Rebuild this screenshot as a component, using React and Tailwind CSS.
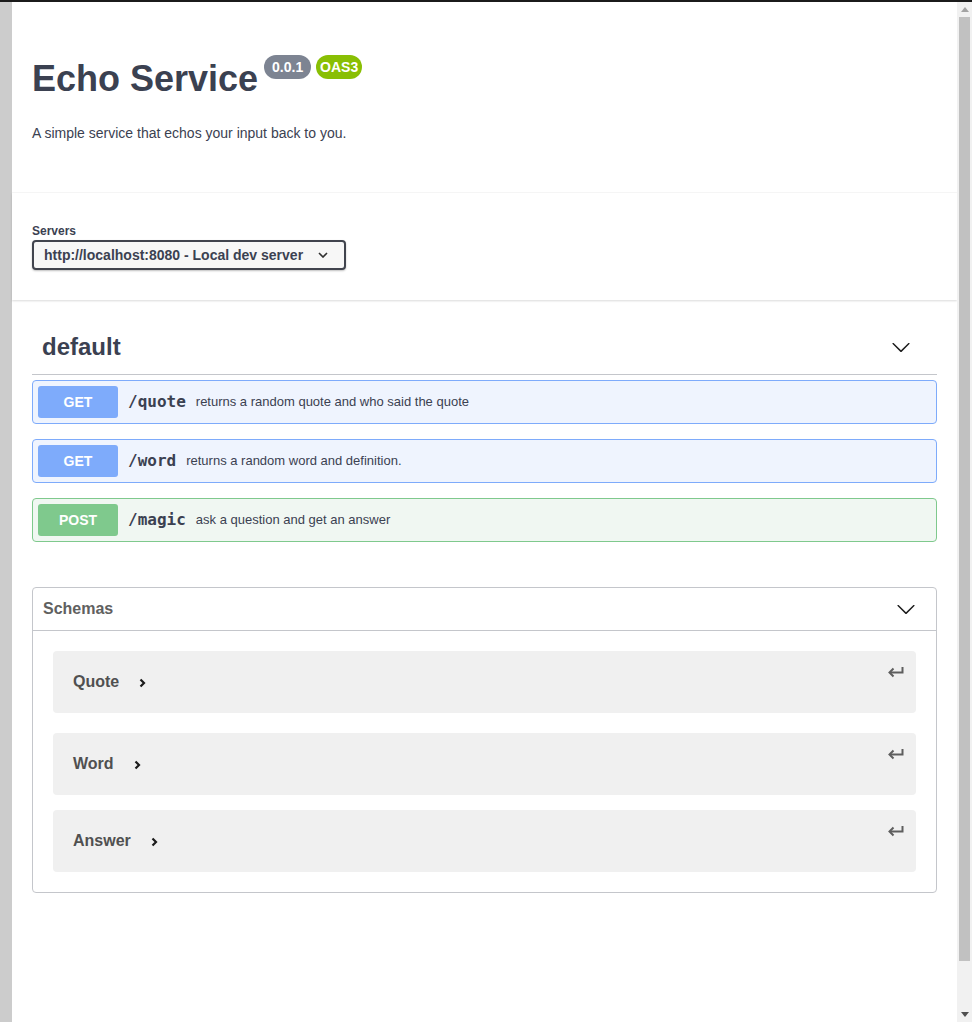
const ARROW = 'M17.418 6.109c.272-.268.709-.268.979 0s.271.701 0 .969l-7.908 7.83c-.27.268-.707.268-.979 0l-7.908-7.83c-.27-.268-.27-.701 0-.969.271-.268.709-.268.979 0L10 13.25l7.418-7.141z'

const OPS = [
  { method: 'GET', path: '/quote', summary: 'returns a random quote and who said the quote' },
  { method: 'GET', path: '/word', summary: 'returns a random word and definition.' },
  { method: 'POST', path: '/magic', summary: 'ask a question and get an answer' },
]

const SCHEMAS = [
  { name: 'Quote', gap: 'mt-0' },
  { name: 'Word', gap: 'mt-[20px]' },
  { name: 'Answer', gap: 'mt-[15px]' },
]

function Arrow({ className = '' }) {
  return (
    <svg width="20" height="20" viewBox="0 0 20 20" className={className}>
      <path d={ARROW} fill="#1b1b1b" />
    </svg>
  )
}

function OpBlock({ method, path, summary }) {
  const isPost = method === 'POST'
  return (
    <div
      className={`flex items-center rounded-[4px] border p-[5px] mt-[15px] first:mt-0 ${
        isPost ? 'border-[#7fc98d] bg-[#f0f7f2]' : 'border-[#7eabfb] bg-[#eff4fe]'
      }`}
    >
      <div
        className={`w-[80px] h-[32px] rounded-[3px] flex items-center justify-center text-white text-[14px] font-bold ${
          isPost ? 'bg-[#7fc98d]' : 'bg-[#7eabfb]'
        }`}
      >
        {method}
      </div>
      <span className="ml-[10px] font-['DejaVu_Sans_Mono',monospace] font-bold text-[16px] text-[#3b4151]">{path}</span>
      <span className="ml-[10px] text-[13px] text-[#3b4151]">{summary}</span>
    </div>
  )
}

function SchemaRow({ name, gap }) {
  return (
    <div className={`${gap} h-[62px] rounded-[4px] bg-[#f0f0f0] flex justify-between pl-[20px] pr-[12px]`}>
      <div className="flex items-center">
        <span className="text-[16px] font-bold text-[#505050]">{name}</span>
        <svg width="7" height="10" viewBox="0 0 7 10" className="ml-[20px] mt-[2px]">
          <polyline points="1.5,1.5 5,5 1.5,8.5" fill="none" stroke="#1b1b1b" strokeWidth="2.2" />
        </svg>
      </div>
      <svg width="17" height="12" viewBox="0 0 17 12" className="mt-[15px]">
        <path d="M15.5 1v5.5H3" fill="none" stroke="#5e5e5e" strokeWidth="2" />
        <path d="M6.5 2.5 2.5 6.5 6.5 10.5" fill="none" stroke="#5e5e5e" strokeWidth="2" />
      </svg>
    </div>
  )
}

function Scrollbar() {
  return (
    <div className="w-[15px] bg-[#f1f1f1] flex flex-col">
      <div className="h-[15px] flex items-center justify-center">
        <svg width="8" height="5" viewBox="0 0 8 5"><polygon points="0,5 8,5 4,0" fill="#a3a3a3" /></svg>
      </div>
      <div className="h-[944px] mx-[2px] bg-[#c1c1c1]" />
      <div className="flex-1" />
      <div className="h-[15px] flex items-center justify-center">
        <svg width="8" height="5" viewBox="0 0 8 5"><polygon points="0,0 8,0 4,5" fill="#505050" /></svg>
      </div>
    </div>
  )
}

export default function App() {
  return (
    <div className="h-[1022px] flex flex-col overflow-hidden font-['Liberation_Sans',Arial,sans-serif] text-[#3b4151]">
      <div className="h-[2px] bg-[#1b1b1b]" />
      <div className="flex flex-1 min-h-0">
        <div className="w-[12px] bg-[#cccccc]" />
        <div className="flex-1 bg-white">
          {/* info */}
          <div className="px-[20px] pt-[55px] pb-[50px]">
            <div className="flex items-start">
              <h2 className="mt-[2px] text-[36px] leading-[40px] font-bold text-[#3b4151]">Echo Service</h2>
              <span className="ml-[6px] -mt-[2px] w-[47px] h-[24px] rounded-full bg-[#7d8492] text-white text-[14px] font-bold flex items-center justify-center">0.0.1</span>
              <span className="ml-[5px] -mt-[2px] w-[46px] h-[24px] rounded-full bg-[#89bf04] text-white text-[14px] font-bold flex items-center justify-center">OAS3</span>
            </div>
            <p className="mt-[24px] text-[14px] leading-[20px]">A simple service that echos your input back to you.</p>
          </div>

          {/* servers */}
          <div className="bg-white shadow-[0_1px_2px_0_rgba(0,0,0,0.15),0_-1px_0_0_#f7f7f7] px-[20px] py-[30px]">
            <div className="text-[12px] leading-[16px] font-bold">Servers</div>
            <div className="mt-[1px] w-[314px] h-[30px] rounded-[4px] border-2 border-[#41444e] bg-[#f7f7f7] shadow-[0_1px_2px_0_rgba(0,0,0,0.25)] flex items-center justify-between pl-[10px] pr-[16px]">
              <span className="text-[14px] font-bold">http://localhost:8080 - Local dev server</span>
              <svg width="10" height="6" viewBox="0 0 10 6">
                <polyline points="1,1 5,5 9,1" fill="none" stroke="#303030" strokeWidth="1.6" />
              </svg>
            </div>
          </div>

          <div className="px-[20px]">
            {/* tag */}
            <div className="mt-[20px] h-[55px] border-b border-[#c4c6cb] flex items-center justify-between pl-[10px] pr-[26px]">
              <h3 className="text-[24px] font-bold">default</h3>
              <Arrow />
            </div>
            <div className="mt-[5px]">
              {OPS.map((op) => (
                <OpBlock key={op.path} {...op} />
              ))}
            </div>

            {/* schemas */}
            <div className="mt-[45px] rounded-[4px] border border-[#c4c6cb]">
              <div className="h-[43px] border-b border-[#c4c6cb] flex items-center justify-between pl-[10px] pr-[20px]">
                <h4 className="text-[16px] font-bold text-[#606060]">Schemas</h4>
                <Arrow />
              </div>
              <div className="p-[20px]">
                {SCHEMAS.map((s) => (
                  <SchemaRow key={s.name} {...s} />
                ))}
              </div>
            </div>
          </div>
        </div>
        <Scrollbar />
      </div>
    </div>
  )
}
